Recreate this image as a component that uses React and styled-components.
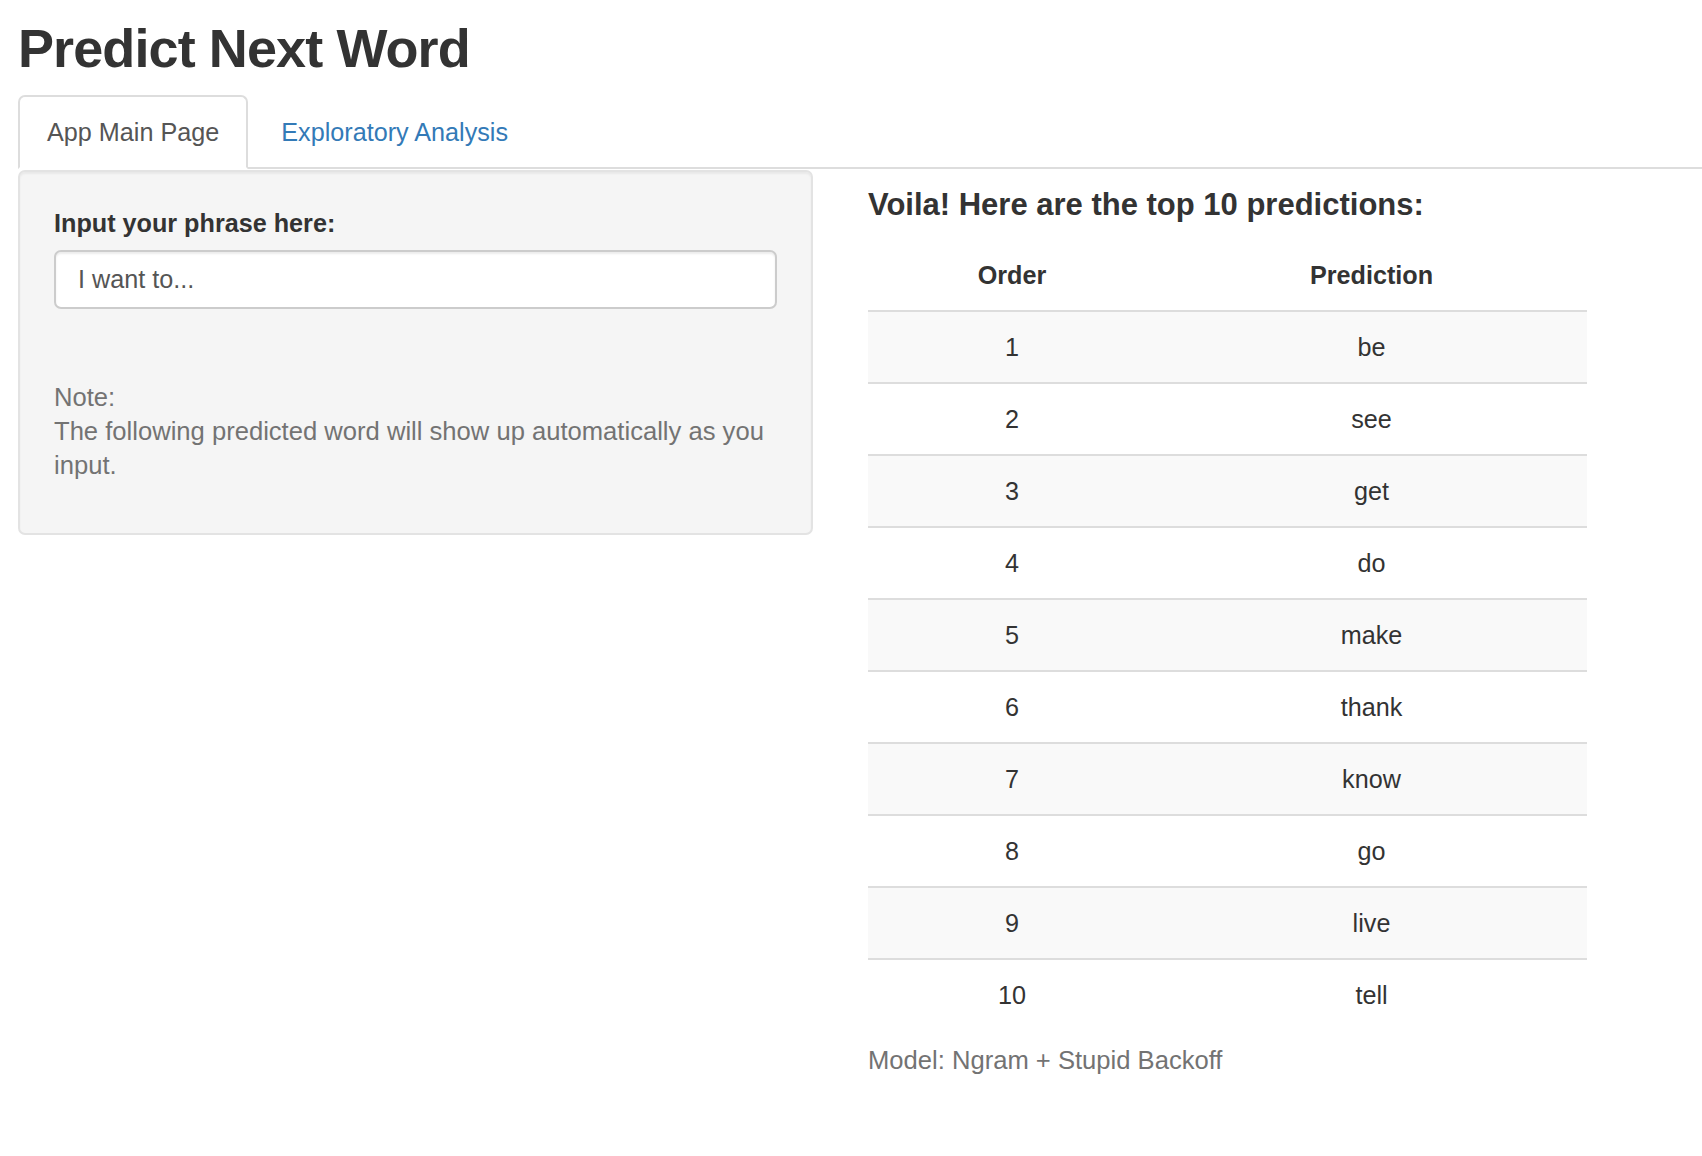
import React from "react";
import styled, { createGlobalStyle } from "styled-components";

const GlobalStyle = createGlobalStyle`
  html, body {
    margin: 0;
    padding: 0;
    background: #ffffff;
  }
  body {
    font-family: "Liberation Sans", Helvetica, Arial, sans-serif;
    font-size: 25.2px;
    line-height: 36px;
    color: #333333;
  }
  * { box-sizing: border-box; }
`;

const Page = styled.div`
  padding: 0 0 40px 18px;
`;

const Title = styled.h2`
  margin: 19px 0 17px;
  font-size: 54px;
  line-height: 59.4px;
  font-weight: 700;
  letter-spacing: -0.9px;
  color: #333333;
`;

const TabList = styled.ul`
  list-style: none;
  margin: 0;
  padding: 0;
  display: flex;
  border-bottom: 2px solid #dddddd;
`;

const TabItem = styled.li`
  margin: 0 4px -2px 0;
`;

const TabLink = styled.a`
  display: block;
  padding: 17px 27px;
  line-height: 36px;
  font-size: 25.2px;
  text-decoration: none;
  border: 2px solid ${(p) => (p.$active ? "#dddddd" : "transparent")};
  border-bottom-color: ${(p) => (p.$active ? "#ffffff" : "transparent")};
  border-radius: 7px 7px 0 0;
  background: ${(p) => (p.$active ? "#ffffff" : "transparent")};
  color: ${(p) => (p.$active ? "#555555" : "#337ab7")};
  cursor: pointer;
`;

const Row = styled.div`
  display: flex;
  align-items: flex-start;
  margin-top: 1px;
`;

const Well = styled.div`
  width: 795px;
  flex: none;
  padding: 33px 34px;
  background: #f5f5f5;
  border: 2px solid #e3e3e3;
  border-radius: 7px;
  box-shadow: inset 0 2px 2px rgba(0, 0, 0, 0.05);
`;

const FormGroup = styled.div`
  margin-bottom: 27px;
`;

const Label = styled.label`
  display: block;
  font-weight: 700;
  margin-bottom: 9px;
`;

const TextInput = styled.input`
  display: block;
  width: 100%;
  height: 59px;
  padding: 0 22px;
  font-family: inherit;
  font-size: 25.2px;
  color: #555555;
  background: #ffffff;
  border: 2px solid #cccccc;
  border-radius: 7px;
  box-shadow: inset 0 2px 2px rgba(0, 0, 0, 0.075);
  outline: none;
`;

const HelpBlock = styled.div`
  margin: 71px 0 18px;
  font-size: 25.6px;
  line-height: 34px;
  color: #737373;
`;

const Main = styled.div`
  margin-left: 55px;
  flex: none;
`;

const Heading = styled.h4`
  margin: 18px 0;
  font-size: 31px;
  line-height: 34px;
  font-weight: 700;
  color: #333333;
`;

const Table = styled.table`
  width: 719px;
  border-collapse: collapse;
  border-spacing: 0;
`;

const HeadCell = styled.th`
  width: ${(p) => p.$w}px;
  padding: 17px 14px;
  line-height: 36px;
  text-align: center;
  font-weight: 700;
  border-bottom: 2px solid #dddddd;
`;

const BodyRow = styled.tr`
  background: ${(p) => (p.$striped ? "#f9f9f9" : "transparent")};
  border-top: ${(p) => (p.$first ? "none" : "2px solid #dddddd")};
`;

const Cell = styled.td`
  padding: 17px 14px;
  line-height: 36px;
  text-align: center;
  color: #333333;
`;

const Footnote = styled.div`
  margin-top: 12px;
  font-size: 25.6px;
  color: #737373;
`;

const predictions = ["be", "see", "get", "do", "make", "thank", "know", "go", "live", "tell"];

export default function App() {
  return (
    <>
      <GlobalStyle />
      <Page>
        <Title>Predict Next Word</Title>
        <TabList>
          <TabItem>
            <TabLink $active>App Main Page</TabLink>
          </TabItem>
          <TabItem>
            <TabLink>Exploratory Analysis</TabLink>
          </TabItem>
        </TabList>
        <Row>
          <Well>
            <FormGroup>
              <Label htmlFor="phrase">Input your phrase here:</Label>
              <TextInput id="phrase" type="text" defaultValue="I want to..." />
            </FormGroup>
            <HelpBlock>
              Note:
              <br />
              The following predicted word will show up automatically as you input.
            </HelpBlock>
          </Well>
          <Main>
            <Heading>Voila! Here are the top 10 predictions:</Heading>
            <Table>
              <thead>
                <tr>
                  <HeadCell $w={288}>Order</HeadCell>
                  <HeadCell $w={431}>Prediction</HeadCell>
                </tr>
              </thead>
              <tbody>
                {predictions.map((word, i) => (
                  <BodyRow key={word} $striped={i % 2 === 0} $first={i === 0}>
                    <Cell>{i + 1}</Cell>
                    <Cell>{word}</Cell>
                  </BodyRow>
                ))}
              </tbody>
            </Table>
            <Footnote>Model: Ngram + Stupid Backoff</Footnote>
          </Main>
        </Row>
      </Page>
    </>
  );
}
